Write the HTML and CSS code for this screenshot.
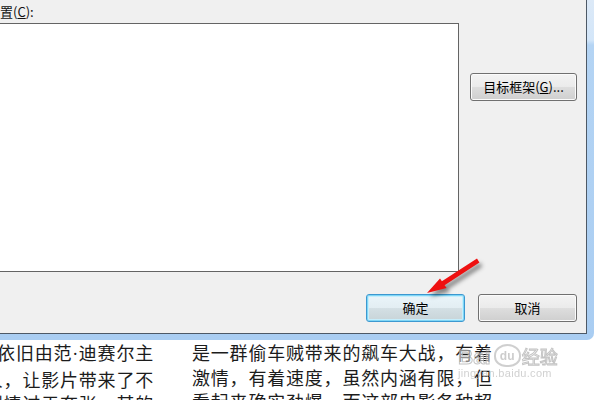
FILE: index.html
```html
<!DOCTYPE html>
<html lang="zh-CN">
<head>
<meta charset="utf-8">
<title>Dialog</title>
<link rel="stylesheet" href="styles.css">
</head>
<body>
<div class="screen">
  <div class="window">
    <div class="dialog">
      <div class="label">置(<u>C</u>):</div>
      <div class="main">
        <div class="listbox"></div>
        <div class="side">
          <button class="btn wide">目标框架(<u>G</u>)...</button>
        </div>
      </div>
      <div class="actions">
        <button class="btn default">确定</button>
        <button class="btn">取消</button>
      </div>
    </div>
  </div>
  <div class="article">
    <div class="col c1">
      <p>依旧由范<span class="dot">·</span>迪赛尔主</p>
      <p>人，让影片带来了不</p>
      <p>剧情过于夸张，甚的</p>
    </div>
    <div class="col c2">
      <p>是一群偷车贼带来的飙车大战，有着</p>
      <p>激情，有着速度，虽然内涵有限，但</p>
      <p>看起来确实劲爆，而这部电影各种超</p>
    </div>
  </div>
  <svg class="arrow" width="600" height="400" viewBox="0 0 600 400">
    <defs>
      <filter id="blur" x="-20%" y="-20%" width="140%" height="140%">
        <feGaussianBlur stdDeviation="2"/>
      </filter>
    </defs>
    <polygon transform="translate(3 4)" filter="url(#blur)" fill="rgba(0,0,0,0.45)"
      points="427,293 440,278.6 441.9,281.3 477,258.6 479.4,262.4 444.6,285.3 446.6,288"/>
    <polygon fill="#ee1111"
      points="427,293 440,278.6 441.9,281.3 477,258.6 479.4,262.4 444.6,285.3 446.6,288"/>
  </svg>
  <div class="watermark">
    <div class="wm-top">
      <span class="wm-bai">Bai</span>
      <span class="wm-paw"><span class="wm-du">du</span></span>
      <span class="wm-jy">经验</span>
    </div>
    <div class="wm-url">jingyan.baidu.com</div>
  </div>
</div>
</body>
</html>
```
FILE: styles.css
```css
html, body {
  margin: 0;
  padding: 0;
  background: #ffffff;
}
.screen {
  position: relative;
  width: 600px;
  height: 400px;
  overflow: hidden;
  font-family: "Noto Sans CJK SC", "Noto Sans", sans-serif;
}
.window {
  width: 594px;
  height: 340px;
  box-sizing: border-box;
  padding: 0 7px 6px 0;
  background: linear-gradient(180deg, #dce9f7 0px, #d3e6f9 40px, #b4d4f4 45px, #a9cdf2 100%);
  border-bottom-right-radius: 7px;
}
.dialog {
  width: 587px;
  height: 334px;
  box-sizing: border-box;
  background: #f0f0f0;
  border-right: 1px solid #4d5966;
  border-bottom: 1px solid #4d5966;
  display: flex;
  flex-direction: column;
}
.label {
  height: 23px;
  line-height: 23px;
  font-size: 13px;
  color: #111;
}
.label u, .btn u {
  text-decoration: underline;
  text-underline-offset: 1px;
}
.main {
  display: flex;
  height: 249px;
}
.listbox {
  width: 460px;
  height: 249px;
  margin-left: -1px;
  box-sizing: border-box;
  border: 1px solid #646464;
  background: #ffffff;
}
.side {
  margin-left: 11px;
  padding-top: 50px;
}
.btn {
  box-sizing: border-box;
  height: 28px;
  padding: 0;
  border: 1px solid #707070;
  border-radius: 3px;
  background: linear-gradient(180deg, #f3f3f3 0%, #ebebeb 48%, #dddddd 52%, #cfcfcf 100%);
  box-shadow: inset 0 0 0 1px #fbfbfb;
  font-family: "Noto Sans CJK SC", "Noto Sans", sans-serif;
  font-size: 13px;
  color: #000;
  line-height: 26px;
}
.btn.wide {
  width: 107px;
}
.actions {
  display: flex;
  justify-content: flex-end;
  gap: 13px;
  padding-right: 9px;
  margin-top: 22px;
}
.actions .btn {
  width: 99px;
}
.btn.default {
  border-color: #3c98d0;
  box-shadow: inset 0 0 0 1px #7fd6f6, inset 0 0 0 2px #c6eefc;
  background: linear-gradient(180deg, #eaf5fa 0%, #e3eef3 48%, #d3dfe4 52%, #c8d4d8 100%);
}
.article {
  display: flex;
  font-size: 18px;
  line-height: 24.5px;
  letter-spacing: 0.8px;
  color: #1c1c1c;
}
.article p {
  margin: 0;
  white-space: nowrap;
}
.dot {
  font-family: "Liberation Serif", serif;
  letter-spacing: 0.5px;
}
.c1 {
  width: 170px;
  margin-left: -16px;
  text-align: right;
  flex: none;
}
.c2 {
  margin-left: 38px;
  flex: none;
}
.arrow {
  position: absolute;
  left: 0;
  top: 0;
  pointer-events: none;
}
.watermark {
  position: absolute;
  left: 458px;
  top: 335px;
  width: 116px;
  opacity: 0.75;
}
.wm-top {
  display: flex;
  align-items: flex-end;
  height: 32px;
}
.wm-bai {
  font-family: "Liberation Sans", sans-serif;
  font-weight: bold;
  font-size: 21px;
  line-height: 21px;
  color: rgba(255, 255, 255, 0.7);
  -webkit-text-stroke: 1px #b0b0b0;
}
.wm-paw {
  width: 27px;
  height: 23px;
  margin: 0 1px 0 3px;
  border: 2px solid #c0c0c0;
  border-radius: 50% 50% 45% 45%;
  display: flex;
  align-items: center;
  justify-content: center;
  box-sizing: border-box;
  background: rgba(255, 255, 255, 0.5);
}
.wm-du {
  font-family: "Liberation Sans", sans-serif;
  font-weight: bold;
  font-size: 12px;
  line-height: 12px;
  color: #bcbcbc;
}
.wm-jy {
  font-size: 18px;
  line-height: 21px;
  color: rgba(255, 255, 255, 0.7);
  -webkit-text-stroke: 1px #b0b0b0;
}
.wm-url {
  font-family: "Liberation Sans", sans-serif;
  font-size: 11px;
  line-height: 13px;
  color: #c2c2c2;
  letter-spacing: 0.3px;
}
```
